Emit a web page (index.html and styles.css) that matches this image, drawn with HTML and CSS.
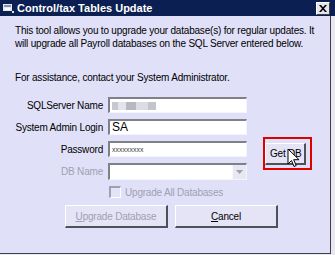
FILE: index.html
```html
<!DOCTYPE html>
<html>
<head>
<meta charset="utf-8">
<link rel="stylesheet" href="styles.css">
</head>
<body>
<div class="window">
  <div class="titlebar">
    <span class="app-icon">
      <svg width="12" height="11" viewBox="0 0 12 11">
        <rect x="0" y="1" width="9" height="7" fill="#e8e8e8"/>
        <rect x="1" y="2" width="7" height="2" fill="#8090c0"/>
        <rect x="2" y="5" width="5" height="2" fill="#ffffff"/>
        <rect x="9" y="8" width="2" height="2" fill="#e8e8e8"/>
      </svg>
    </span>
    <span class="title">Control/tax Tables Update</span>
    <span class="close">
      <svg width="8" height="7" viewBox="0 0 8 7"><path d="M0 0h2l2 2.2L6 0h2L5 3.5 8 7H6L4 4.8 2 7H0l3-3.5z" fill="#000"/></svg>
    </span>
  </div>
  <div class="content">
    <p class="intro">This tool allows you to upgrade your database(s) for regular updates. It will upgrade all Payroll databases on the SQL Server entered below.</p>
    <p class="assist">For assistance, contact your System Administrator.</p>
    <div class="form">
      <label class="lbl r1">SQLServer Name</label>
      <div class="field r1 blurred"><span class="blur b1"></span><span class="blur b2"></span><span class="blur b3"></span><span class="blur b4"></span><span class="blur b5"></span></div>
      <label class="lbl r2">System Admin Login</label>
      <div class="field r2">SA</div>
      <label class="lbl r3">Password</label>
      <div class="field r3 pwd">xxxxxxxxx</div>
      <label class="lbl r4 disabled">DB Name</label>
      <div class="field r4 combo"><span class="drop"><svg width="7" height="4" viewBox="0 0 7 4"><path d="M0 0h7L3.5 4z" fill="#a0a0b0"/></svg></span></div>
      <div class="getdb-cell">
        <div class="btn getdb">Get DB</div>
        <svg class="cursor" width="14" height="20" viewBox="0 0 14 20"><path d="M1 1v15l3.5-3.5 2.5 6 2.2-1-2.5-5.8H12z" fill="#fff" stroke="#000" stroke-width="1"/></svg>
        <div class="highlight"></div>
      </div>
    </div>
    <div class="check-row">
      <span class="checkbox"></span>
      <span class="disabled">Upgrade All Databases</span>
    </div>
    <div class="buttons">
      <div class="btn big disabled-btn"><u>U</u>pgrade Database</div>
      <div class="btn big"><u>C</u>ancel</div>
    </div>
  </div>
</div>
</body>
</html>
```

FILE: styles.css
```css
html, body {
  margin: 0;
  padding: 0;
}
body {
  width: 335px;
  height: 255px;
  background: #e8e8ee;
  font-family: "Liberation Sans", Arial, sans-serif;
  font-size: 10px;
  letter-spacing: -0.2px;
  color: #000;
  overflow: hidden;
}
.window {
  width: 330px;
  height: 253px;
  background: #e0e0f8;
  border-right: 1px solid #404048;
  border-bottom: 1px solid #404048;
  display: flex;
  flex-direction: column;
}
.titlebar {
  height: 16px;
  width: 335px;
  background: #0c1f52;
  display: flex;
  align-items: center;
  color: #fff;
  flex: none;
}
.app-icon {
  width: 12px;
  height: 11px;
  margin-left: 3px;
  display: flex;
}
.title {
  margin-left: 2px;
  font-family: "Liberation Sans", Arial, sans-serif;
  font-weight: bold;
  font-size: 11px;
  letter-spacing: 0;
}
.close {
  margin-left: auto;
  margin-right: 5px;
  width: 12px;
  height: 11px;
  background: #e4e4ec;
  border: 1px solid #fff;
  border-right-color: #404040;
  border-bottom-color: #404040;
  display: flex;
  align-items: center;
  justify-content: center;
}
.content {
  padding: 0 0 0 15px;
}
.intro {
  margin: 8px 0 0 0;
  width: 305px;
  line-height: 13px;
}
.assist {
  margin: 21px 0 0 0;
  line-height: 13px;
}
.form {
  margin-top: 13px;
  display: grid;
  grid-template-columns: 88px 139px 42px;
  column-gap: 5px;
  row-gap: 6px;
  grid-template-rows: 16px 16px 16px 17px;
}
.r1 { grid-row: 1; }
.r2 { grid-row: 2; }
.r3 { grid-row: 3; }
.r4 { grid-row: 4; }
.lbl { grid-column: 1; }
.field { grid-column: 2; }
.form .getdb-cell {
  grid-column: 3;
  grid-row: 3 / span 2;
  position: relative;
  margin-left: 13px;
}
.lbl {
  text-align: right;
  align-self: center;
  white-space: nowrap;
}
.disabled {
  color: #a0a0b0;
}
.field {
  background: #fff;
  border-top: 2px solid #808088;
  border-left: 2px solid #808088;
  border-bottom: 1px solid #f4f4ff;
  border-right: 1px solid #f4f4ff;
  box-sizing: border-box;
  padding-left: 2px;
  line-height: 13px;
  font-size: 12px;
  letter-spacing: 0;
  display: flex;
  align-items: center;
}
.pwd {
  font-size: 7px;
  color: #404040;
}
.blur {
  height: 8px;
  display: inline-block;
}
.b1 { width: 6px; background: #c8c8d0; }
.b2 { width: 8px; background: #e4e4ec; }
.b3 { width: 10px; background: #b8b8c0; }
.b4 { width: 12px; background: #dcdce4; }
.b5 { width: 8px; background: #c4c4cc; }
.combo {
  justify-content: flex-end;
  padding: 0;
}
.drop {
  width: 13px;
  height: 14px;
  background: #e8e8f4;
  border-left: 1px solid #f8f8ff;
  display: flex;
  align-items: center;
  justify-content: center;
}
.btn {
  background: #e4e4f6;
  border: 1px solid #fff;
  border-right: 2px solid #505058;
  border-bottom: 2px solid #505058;
  box-sizing: border-box;
  display: flex;
  align-items: center;
  justify-content: center;
  white-space: nowrap;
}
.getdb {
  width: 41px;
  height: 22px;
  margin-top: 2px;
  justify-content: flex-start;
  padding-left: 4px;
}
.cursor {
  position: absolute;
  left: 22px;
  top: 7px;
}
.highlight {
  position: absolute;
  left: -2px;
  top: -4px;
  width: 49px;
  height: 33px;
  border: 2px solid #e00000;
  box-sizing: border-box;
}
.check-row {
  margin-top: 6px;
  margin-left: 94px;
  display: flex;
  align-items: center;
  gap: 4px;
  height: 12px;
}
.checkbox {
  width: 12px;
  height: 12px;
  box-sizing: border-box;
  border-top: 2px solid #a0a0b0;
  border-left: 2px solid #a0a0b0;
  border-right: 1px solid #fff;
  border-bottom: 1px solid #fff;
  background: #e4e4f6;
}
.buttons {
  margin-top: 7px;
  margin-left: 50px;
  display: flex;
  gap: 7px;
}
.big {
  width: 103px;
  height: 23px;
}
.disabled-btn {
  color: #a0a0b0;
}
```
